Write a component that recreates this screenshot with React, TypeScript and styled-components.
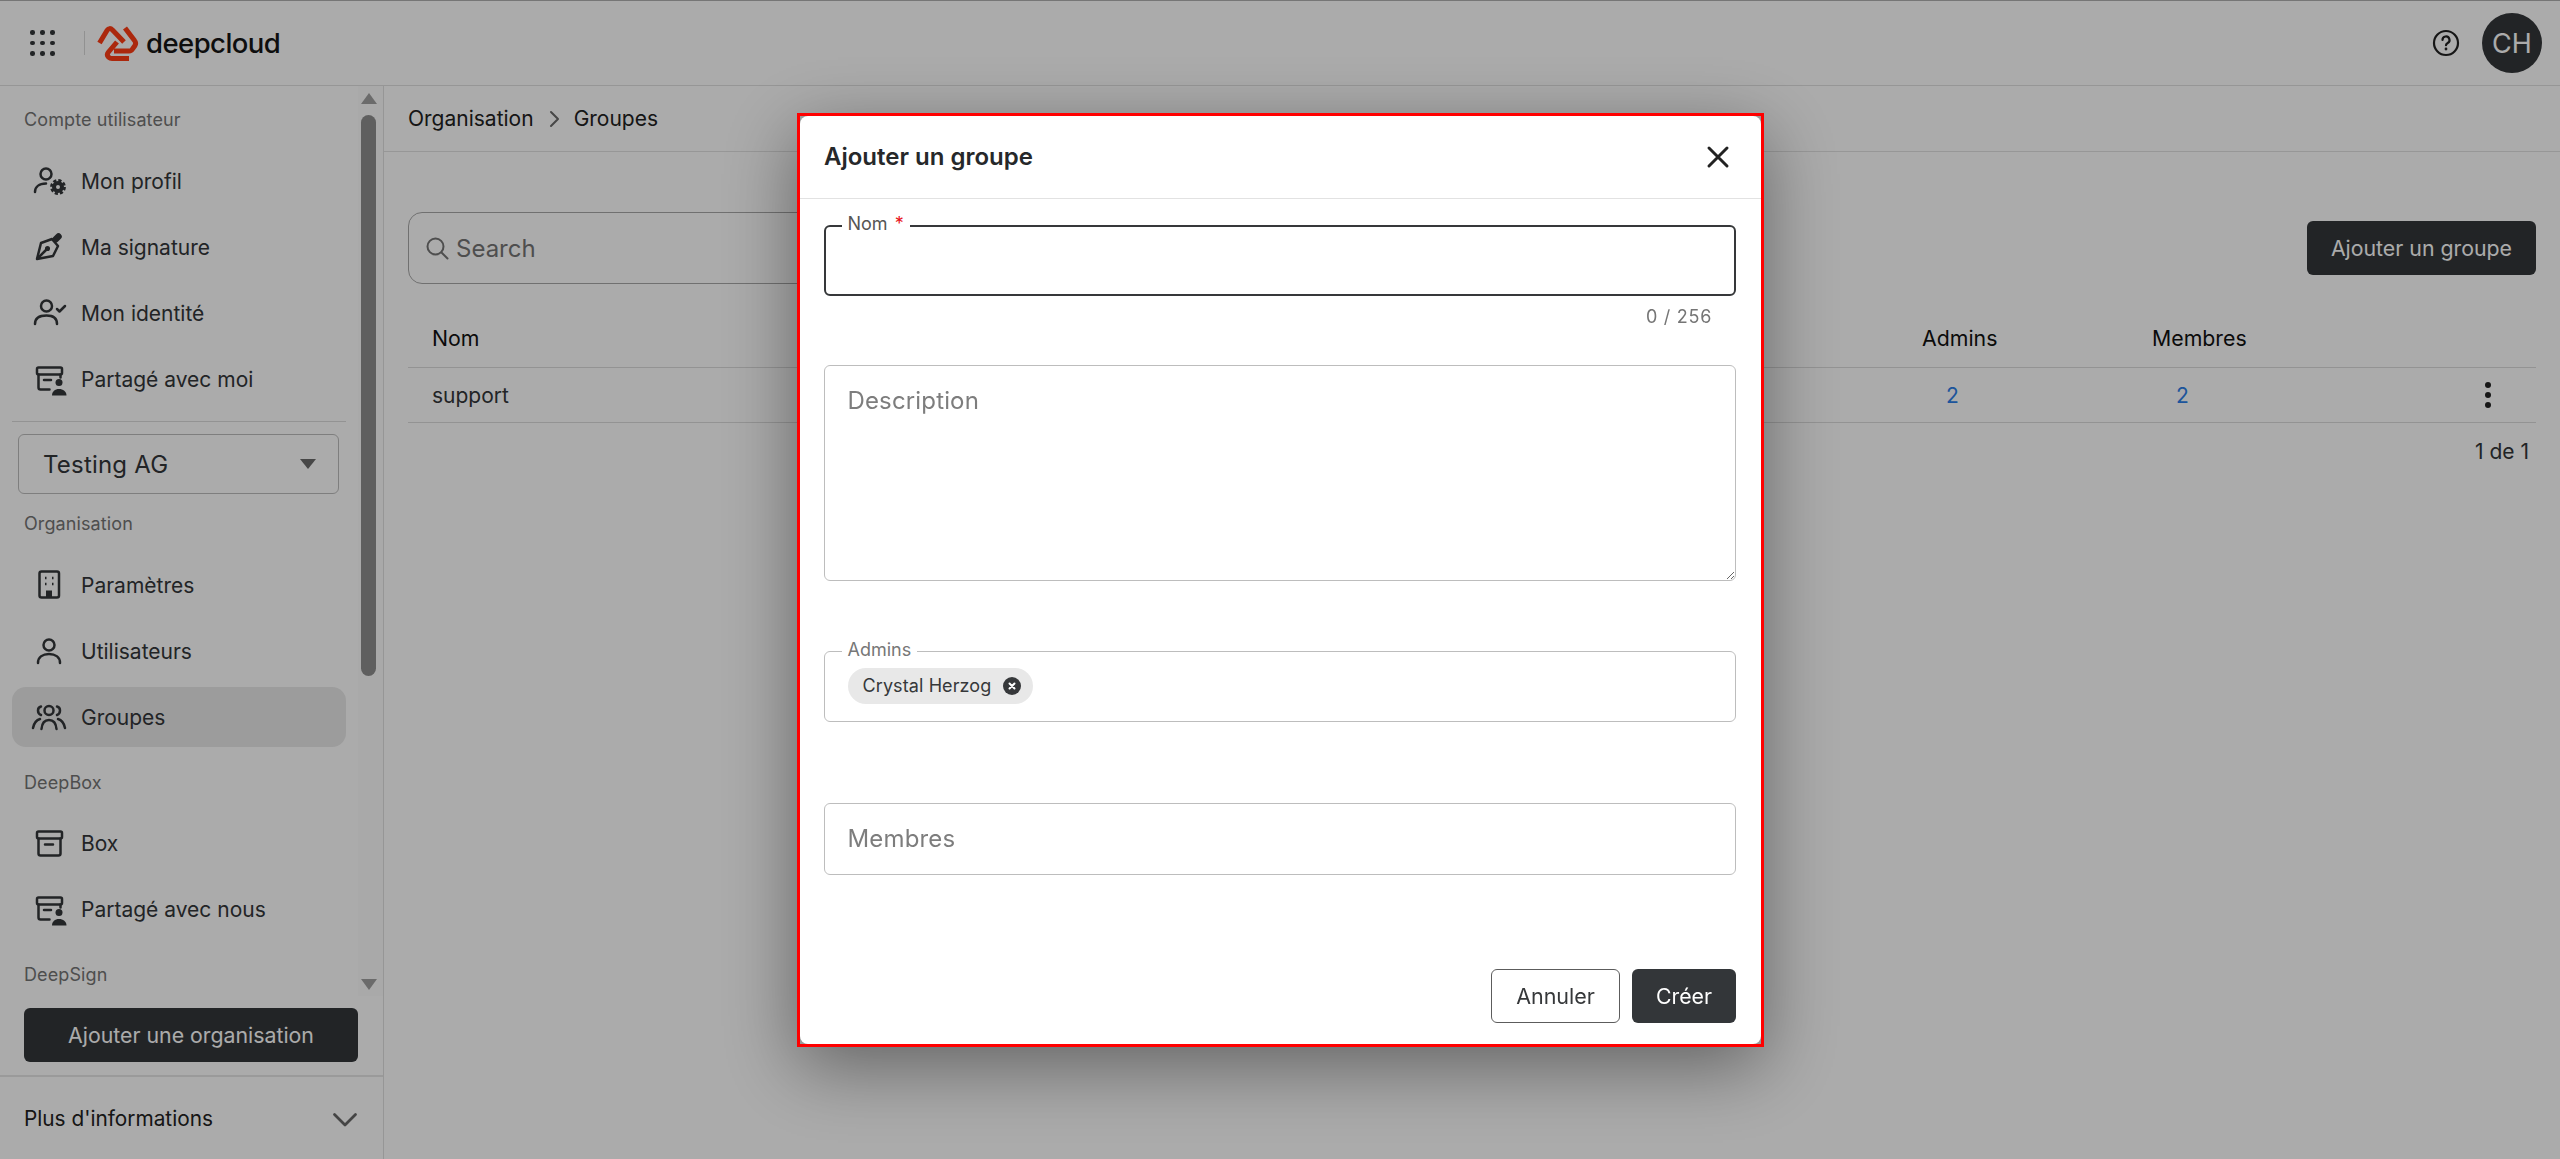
import React from "react";
import styled, { createGlobalStyle } from "styled-components";

const GlobalStyle = createGlobalStyle`
    html, body {
        margin: 0;
        height: 100%;
        overflow: hidden;
        background: #fff;
        font-family: Inter, "Liberation Sans", sans-serif;
        color: #333639;
    }
    * { box-sizing: border-box; }
`;

// page frame

const Page = styled.div`
    height: 1159px;
    display: flex;
    flex-direction: column;
    border-top: 1px solid #b0b0b0;
`;
const Header = styled.header`
    height: 85px;
    flex: none;
    display: flex;
    align-items: center;
    justify-content: space-between;
    padding: 0 18px 0 30px;
    border-bottom: 1px solid #e0e0e0;
`;
const HeaderLeft = styled.div`
    display: flex;
    align-items: center;
`;
const HeaderRight = styled.div`
    display: flex;
    align-items: center;
    gap: 23px;
`;
const AppsGrid = styled.div`
    width: 24px;
    display: grid;
    grid-template-columns: repeat(3, 4px);
    justify-content: space-between;
    row-gap: 6px;
    span {
        width: 4.5px;
        height: 4.5px;
        border-radius: 50%;
        background: #333639;
    }
`;
const LogoDivider = styled.div`
    width: 1px;
    height: 24px;
    margin: 0 12px 0 30px;
    background: #d8d8d8;
`;
const LogoText = styled.span`
    margin-left: 9px;
    font-size: 27.5px;
    font-weight: 500;
    letter-spacing: -0.55px;
    color: #161616;
`;
const Avatar = styled.div`
    width: 60px;
    height: 60px;
    border-radius: 50%;
    display: flex;
    align-items: center;
    justify-content: center;
    background: #333639;
    color: #fff;
    font-size: 27px;
`;
const Body = styled.div`
    flex: 1;
    display: flex;
    min-height: 0;
`;

// sidebar

const Sidebar = styled.aside`
    width: 384px;
    flex: none;
    display: flex;
    flex-direction: column;
    border-right: 1px solid #e0e0e0;
`;
const ScrollArea = styled.div`
    height: 910px;
    flex: none;
    display: flex;
    overflow: hidden;
`;
const ScrollContent = styled.div`
    width: 358px;
    flex: none;
    padding: 22px 12px 0;
`;
const ScrollTrack = styled.div`
    flex: 1;
    display: flex;
    flex-direction: column;
    align-items: center;
    padding: 7px 4px 6px 0;
    background: #fdfdfd;
`;
const ScrollArrow = styled.div<{ $down?: boolean }>`
    width: 0;
    height: 0;
    flex: none;
    border-left: 8px solid transparent;
    border-right: 8px solid transparent;
    border-${(p) => (p.$down ? "top" : "bottom")}: 11px solid #a0a0a0;
`;
const ScrollThumb = styled.div`
    width: 15px;
    height: 561px;
    margin: 11px 0 auto;
    flex: none;
    border-radius: 8px;
    background: #8e8e8e;
`;
const SectionLabel = styled.div`
    height: 24px;
    line-height: 24px;
    padding-left: 12px;
    font-size: 18px;
    letter-spacing: 0.1px;
    color: #757575;
`;
const NavList = styled.div<{ $top?: number; $bottom?: number }>`
    display: flex;
    flex-direction: column;
    gap: 6px;
    margin: ${(p) => p.$top ?? 19}px 0 ${(p) => p.$bottom ?? 24}px;
`;
const NavItem = styled.div<{ $active?: boolean }>`
    height: 60px;
    display: flex;
    align-items: center;
    gap: 17px;
    padding-left: 20px;
    border-radius: 14px;
    font-size: 21px;
    background: ${(p) => (p.$active ? "#e9e9e9" : "transparent")};
    color: #333639;
`;
const IconSvg = styled.svg`
    width: 32px;
    height: 32px;
    flex: none;
    overflow: visible;
    fill: none;
    stroke: #333639;
    stroke-width: 2.5;
    stroke-linecap: round;
    stroke-linejoin: round;
`;
const SideDivider = styled.div`
    height: 1px;
    margin: 12px 0 12px;
    background: #dcdcdc;
`;
const OrgSelect = styled.div`
    height: 60px;
    margin: 0 7px 18px 6px;
    padding: 0 22px 0 24px;
    display: flex;
    align-items: center;
    justify-content: space-between;
    border: 1.5px solid #bdbdbd;
    border-radius: 6px;
    font-size: 24px;
    letter-spacing: 0.2px;
    color: #333639;
`;
const SelectCaret = styled.div`
    width: 0;
    height: 0;
    border-left: 8.5px solid transparent;
    border-right: 8.5px solid transparent;
    border-top: 10px solid #6a6a6a;
`;
const SideAction = styled.div`
    padding: 12px 25px 13px 24px;
    border-bottom: 2px solid #e6e6e6;
`;
const DarkButton = styled.button`
    height: 54px;
    border: 0;
    border-radius: 6px;
    padding: 0 24px;
    display: flex;
    align-items: center;
    justify-content: center;
    background: #333639;
    color: #fff;
    font: 400 21.3px Inter, "Liberation Sans", sans-serif;
    white-space: nowrap;
`;
const WideDarkButton = styled(DarkButton)`
    width: 100%;
`;
const SideFooter = styled.div`
    flex: 1;
    display: flex;
    align-items: flex-start;
    justify-content: space-between;
    padding: 29px 26px 0 24px;
    font-size: 20.8px;
    color: #222;
`;

// main

const Main = styled.main`
    flex: 1;
    min-width: 0;
    display: flex;
    flex-direction: column;
`;
const Breadcrumb = styled.div`
    height: 66px;
    flex: none;
    display: flex;
    align-items: center;
    gap: 8px;
    padding-left: 24px;
    border-bottom: 1px solid #e2e2e2;
    font-size: 21px;
    color: #222;
`;
const Content = styled.div`
    padding: 60px 24px 0;
`;
const Toolbar = styled.div`
    display: flex;
    align-items: center;
    justify-content: space-between;
`;
const SearchBox = styled.div`
    width: 900px;
    height: 72px;
    display: flex;
    align-items: center;
    gap: 7px;
    padding-left: 16px;
    border: 1.5px solid #a8a8a8;
    border-radius: 14px;
    font-size: 24px;
    color: #757575;
`;
const TableRow = styled.div<{ $head?: boolean }>`
    display: grid;
    grid-template-columns: 1490px 230px 230px 1fr;
    align-items: center;
    height: ${(p) => (p.$head ? 60 : 55)}px;
    margin-top: ${(p) => (p.$head ? 24 : 0)}px;
    padding-left: 24px;
    border-bottom: 1px solid #dcdcdc;
    font-size: ${(p) => (p.$head ? 21.3 : 21)}px;
    color: ${(p) => (p.$head ? "#111" : "#333639")};
`;
const CountLink = styled.span`
    padding-left: 24px;
    color: #2c7ee8;
`;
const Kebab = styled.div`
    justify-self: end;
    margin-right: 45px;
    display: flex;
    flex-direction: column;
    gap: 4px;
    span {
        width: 6px;
        height: 6px;
        border-radius: 50%;
        background: #222;
    }
`;
const Pagination = styled.div`
    margin-top: 16px;
    padding-right: 7px;
    text-align: right;
    font-size: 21px;
    color: #333639;
`;

// dialog

const Overlay = styled.div`
    position: fixed;
    inset: 0;
    display: flex;
    align-items: center;
    justify-content: center;
    padding-left: 1px;
    background: rgba(0, 0, 0, 0.33);
`;
const DialogFrame = styled.div`
    width: 967px;
    height: 934px;
    border: 3.5px solid #f00;
    background: #9a9a9a;
    box-shadow: 0 20px 70px rgba(0, 0, 0, 0.42);
`;
const Dialog = styled.div`
    height: 100%;
    display: flex;
    flex-direction: column;
    border-radius: 8px;
    background: #fff;
`;
const DialogHeader = styled.div`
    height: 83px;
    flex: none;
    display: flex;
    align-items: center;
    justify-content: space-between;
    padding: 0 32px 0 24px;
    border-bottom: 1px solid #e2e2e2;
    font-size: 24px;
    font-weight: 600;
    color: #26282a;
`;
const DialogBody = styled.div`
    flex: 1;
    display: flex;
    flex-direction: column;
    padding: 26px 25px 0 23.5px;
`;
const FieldBox = styled.div`
    position: relative;
`;
const FloatLabel = styled.span<{ $focus?: boolean }>`
    position: absolute;
    left: 18px;
    top: -12px;
    padding: 0 6px;
    line-height: 22px;
    background: #fff;
    font-size: 18px;
    color: ${(p) => (p.$focus ? "#555" : "#777")};
    b {
        font-weight: 400;
        margin-left: 2px;
        color: #e8141c;
    }
`;
const TextInput = styled.input<{ $focus?: boolean }>`
    display: block;
    width: 100%;
    height: ${(p) => (p.$focus ? 71 : 72)}px;
    padding: 0 23px;
    border: ${(p) => (p.$focus ? "2.5px solid #36383a" : "1.5px solid #bdbdbd")};
    border-radius: 6px;
    outline: 0;
    background: #fff;
    font: 400 24px Inter, "Liberation Sans", sans-serif;
    letter-spacing: 0.15px;
    &::placeholder { color: #7d7d7d; opacity: 1; }
`;
const TextArea = styled.textarea`
    display: block;
    width: 100%;
    height: 216px;
    margin-top: 69px;
    padding: 20px 23px;
    border: 1.5px solid #bdbdbd;
    border-radius: 6px;
    outline: 0;
    font: 400 24px Inter, "Liberation Sans", sans-serif;
    letter-spacing: 0.15px;
    &::placeholder { color: #7d7d7d; opacity: 1; }
`;
const Counter = styled.div`
    height: 0;
    padding-right: 24px;
    text-align: right;
    line-height: 42px;
    font-size: 18px;
    letter-spacing: 0.7px;
    color: #757575;
`;
const ChipField = styled.div`
    height: 71px;
    padding: 16px 23px;
    border: 1.5px solid #bdbdbd;
    border-radius: 6px;
`;
const Chip = styled.div`
    display: inline-flex;
    align-items: center;
    gap: 12px;
    height: 36px;
    padding: 0 12px 0 15px;
    border-radius: 18px;
    background: #e8e8e8;
    font-size: 18px;
    letter-spacing: 0.1px;
    color: #36383a;
`;
const DialogFooter = styled.div`
    display: flex;
    justify-content: flex-end;
    gap: 12px;
    padding: 0 25px 21px 24px;
`;
const OutlineButton = styled.button`
    height: 54px;
    padding: 0 24px;
    border: 1.5px solid #5c5c5c;
    border-radius: 6px;
    background: #fff;
    color: #36383a;
    font: 400 21.5px Inter, "Liberation Sans", sans-serif;
`;
const StackedField = styled(FieldBox)<{ $gap: number }>`
    margin-top: ${(p) => p.$gap}px;
`;

// icons

const ProfileIcon = () => (
    <IconSvg viewBox="0 0 32 32">
        <circle cx="14" cy="9" r="5.5" />
        <path d="M3 27c0-5 4-8.5 11-8.5" />
        <circle cx="26" cy="22" r="4" strokeWidth="4" />
        <circle cx="26" cy="22" r="6.6" strokeWidth="2.6" strokeDasharray="3.2 2" strokeLinecap="butt" />
    </IconSvg>
);
const PenIcon = () => (
    <IconSvg viewBox="0 0 32 32">
        <path d="M5 28L9 12l11-4 6 7-5 10z" />
        <path d="M5.5 27.5l9-9" />
        <circle cx="15.5" cy="17.5" r="1.3" fill="#333639" />
        <path d="M23.5 8.5l3-3" strokeWidth="6.5" />
    </IconSvg>
);
const IdentityIcon = () => (
    <IconSvg viewBox="0 0 32 32">
        <circle cx="14.5" cy="9" r="5.5" />
        <path d="M3 27c0-6 5-8.5 11.5-8.5S25 21 25 27" />
        <path d="M25 12l2.5 2.5L33 9" />
    </IconSvg>
);
const SharedIcon = () => (
    <IconSvg viewBox="0 0 32 32">
        <rect x="5" y="4.5" width="25" height="7" rx="1.5" />
        <path d="M6.5 11.5v13a2 2 0 0 0 2 2h9M28.5 11.5v3M12 17h7" />
        <circle cx="27" cy="19.5" r="3.5" fill="#333639" stroke="none" />
        <path d="M20 32.5c0-4 3-6.5 7-6.5s7.5 2.5 7.5 6.5z" fill="#333639" stroke="none" />
    </IconSvg>
);
const BuildingIcon = () => (
    <IconSvg viewBox="0 0 32 32">
        <rect x="7.5" y="2.5" width="19.5" height="26" rx="2" />
        <path d="M13 9h1.5M20 9h1.5M13 15h1.5M20 15h1.5" strokeWidth="2.6" strokeLinecap="butt" />
        <path d="M14 28v-6.5h6V28z" fill="#333639" stroke="none" />
    </IconSvg>
);
const UserIcon = () => (
    <IconSvg viewBox="0 0 32 32">
        <circle cx="17" cy="10" r="5.5" />
        <path d="M6 28c0-6 5-9 11-9s11 3 11 9" />
    </IconSvg>
);
const GroupIcon = () => (
    <IconSvg viewBox="0 0 32 32">
        <circle cx="17" cy="9.5" r="4.5" />
        <path d="M9 5.5c-4 1-4 7 0 8.5M25 5.5c4 1 4 7 0 8.5" />
        <path d="M1 27c1-5 3.5-8 7-9M33 27c-1-5-3.5-8-7-9" />
        <path d="M9.5 28c.5-6 3.5-9 7.5-9s7 3 7.500 9" />
    </IconSvg>
);
const BoxIcon = () => (
    <IconSvg viewBox="0 0 32 32">
        <rect x="5" y="4.5" width="25" height="7" rx="1.5" />
        <path d="M6.5 11.5v15a2 2 0 0 0 2 2h18a2 2 0 0 0 2-2v-15M13 17.5h8" />
    </IconSvg>
);
const HelpIcon = () => (
    <IconSvg viewBox="0 0 26 26" style={{ width: 26, height: 26 }}>
        <circle cx="13" cy="13" r="12" stroke="#222" strokeWidth="2.2" />
        <path d="M9.5 10a3.5 3.5 0 1 1 5.2 3c-1 .6-1.7 1.1-1.7 2.2" stroke="#222" strokeWidth="2.2" />
        <circle cx="13" cy="19" r=".6" stroke="#222" strokeWidth="1.6" />
    </IconSvg>
);
const SearchIcon = () => (
    <IconSvg viewBox="0 0 24 24" style={{ width: 24, height: 24, stroke: "#757575", strokeWidth: 2 }}>
        <circle cx="10.5" cy="10.5" r="8" />
        <path d="M16.5 16.5l6 6" />
    </IconSvg>
);
const ChevronRight = () => (
    <IconSvg viewBox="0 0 24 24" style={{ width: 24, height: 24, stroke: "#6a6a6a", strokeWidth: 2 }}>
        <path d="M9 5l7 7-7 7" />
    </IconSvg>
);
const ChevronDown = () => (
    <IconSvg viewBox="0 0 24 14" style={{ width: 24, height: 14, stroke: "#666", strokeWidth: 2.8, marginTop: 7 }}>
        <path d="M1.5 1.5L12 12 22.5 1.5" />
    </IconSvg>
);
const CloseIcon = () => (
    <IconSvg viewBox="0 0 22 22" style={{ width: 22, height: 22, stroke: "#222", strokeWidth: 3 }}>
        <path d="M2 2l18 18M20 2L2 20" />
    </IconSvg>
);
const ChipCloseIcon = () => (
    <IconSvg viewBox="0 0 18 18" style={{ width: 18, height: 18, stroke: "#fff", strokeWidth: 2 }}>
        <circle cx="9" cy="9" r="9" fill="#36383a" stroke="none" />
        <path d="M6.5 6.5l5 5M11.5 6.5l-5 5" />
    </IconSvg>
);
const LogoMark = () => (
    <IconSvg
        viewBox="0 0 40 36"
        style={{ width: 40, height: 36, stroke: "#ff3c14", strokeWidth: 5, strokeLinecap: "butt" }}
    >
        <path d="M2.5 18L10 5.5Q12.5 2 15.5 5L27 17" />
        <path d="M28 3L37.5 15.5Q39.5 18 38 20.5L35.5 24Q34.5 26 32 26H17" />
        <path d="M20 17L11.5 27Q9.5 29.5 11 31.5L12 32.5Q13 33.5 15 33.5H32" />
    </IconSvg>
);

const accountItems = [
    { label: "Mon profil", icon: <ProfileIcon /> },
    { label: "Ma signature", icon: <PenIcon /> },
    { label: "Mon identité", icon: <IdentityIcon /> },
    { label: "Partagé avec moi", icon: <SharedIcon /> },
];
const orgItems = [
    { label: "Paramètres", icon: <BuildingIcon /> },
    { label: "Utilisateurs", icon: <UserIcon /> },
    { label: "Groupes", icon: <GroupIcon />, active: true },
];
const boxItems = [
    { label: "Box", icon: <BoxIcon /> },
    { label: "Partagé avec nous", icon: <SharedIcon /> },
];

type Item = { label: string; icon: React.ReactNode; active?: boolean };

function Nav({ items, top, bottom }: { items: Item[]; top?: number; bottom?: number }) {
    return (
        <NavList $top={top} $bottom={bottom}>
            {items.map((item) => (
                <NavItem key={item.label} $active={item.active}>
                    {item.icon}
                    {item.label}
                </NavItem>
            ))}
        </NavList>
    );
}

function App() {
    return (
        <>
            <GlobalStyle />
            <Page>
                <Header>
                    <HeaderLeft>
                        <AppsGrid>
                            {Array.from({ length: 9 }).map((_, i) => (
                                <span key={i} />
                            ))}
                        </AppsGrid>
                        <LogoDivider />
                        <LogoMark />
                        <LogoText>deepcloud</LogoText>
                    </HeaderLeft>
                    <HeaderRight>
                        <HelpIcon />
                        <Avatar>CH</Avatar>
                    </HeaderRight>
                </Header>
                <Body>
                    <Sidebar>
                        <ScrollArea>
                            <ScrollContent>
                                <SectionLabel>Compte utilisateur</SectionLabel>
                                <Nav items={accountItems} bottom={0} />
                                <SideDivider />
                                <OrgSelect>
                                    Testing AG
                                    <SelectCaret />
                                </OrgSelect>
                                <SectionLabel>Organisation</SectionLabel>
                                <Nav items={orgItems} />
                                <SectionLabel>DeepBox</SectionLabel>
                                <Nav items={boxItems} top={18} />
                                <SectionLabel>DeepSign</SectionLabel>
                            </ScrollContent>
                            <ScrollTrack>
                                <ScrollArrow />
                                <ScrollThumb />
                                <ScrollArrow $down />
                            </ScrollTrack>
                        </ScrollArea>
                        <SideAction>
                            <WideDarkButton>Ajouter une organisation</WideDarkButton>
                        </SideAction>
                        <SideFooter>
                            Plus d'informations
                            <ChevronDown />
                        </SideFooter>
                    </Sidebar>
                    <Main>
                        <Breadcrumb>
                            Organisation
                            <ChevronRight />
                            Groupes
                        </Breadcrumb>
                        <Content>
                            <Toolbar>
                                <SearchBox>
                                    <SearchIcon />
                                    Search
                                </SearchBox>
                                <DarkButton>Ajouter un groupe</DarkButton>
                            </Toolbar>
                            <TableRow $head>
                                <span>Nom</span>
                                <span>Admins</span>
                                <span>Membres</span>
                            </TableRow>
                            <TableRow>
                                <span>support</span>
                                <CountLink>2</CountLink>
                                <CountLink>2</CountLink>
                                <Kebab>
                                    <span />
                                    <span />
                                    <span />
                                </Kebab>
                            </TableRow>
                            <Pagination>1 de 1</Pagination>
                        </Content>
                    </Main>
                </Body>
            </Page>
            <Overlay>
                <DialogFrame>
                    <Dialog>
                        <DialogHeader>
                            Ajouter un groupe
                            <CloseIcon />
                        </DialogHeader>
                        <DialogBody>
                            <FieldBox>
                                <FloatLabel $focus>
                                    Nom <b>*</b>
                                </FloatLabel>
                                <TextInput $focus />
                            </FieldBox>
                            <Counter>0 / 256</Counter>
                            <TextArea placeholder="Description" />
                            <StackedField $gap={70}>
                                <FloatLabel>Admins</FloatLabel>
                                <ChipField>
                                    <Chip>
                                        Crystal Herzog
                                        <ChipCloseIcon />
                                    </Chip>
                                </ChipField>
                            </StackedField>
                            <StackedField $gap={81}>
                                <TextInput placeholder="Membres" />
                            </StackedField>
                        </DialogBody>
                        <DialogFooter>
                            <OutlineButton>Annuler</OutlineButton>
                            <DarkButton>Créer</DarkButton>
                        </DialogFooter>
                    </Dialog>
                </DialogFrame>
            </Overlay>
        </>
    );
}

export default App;
